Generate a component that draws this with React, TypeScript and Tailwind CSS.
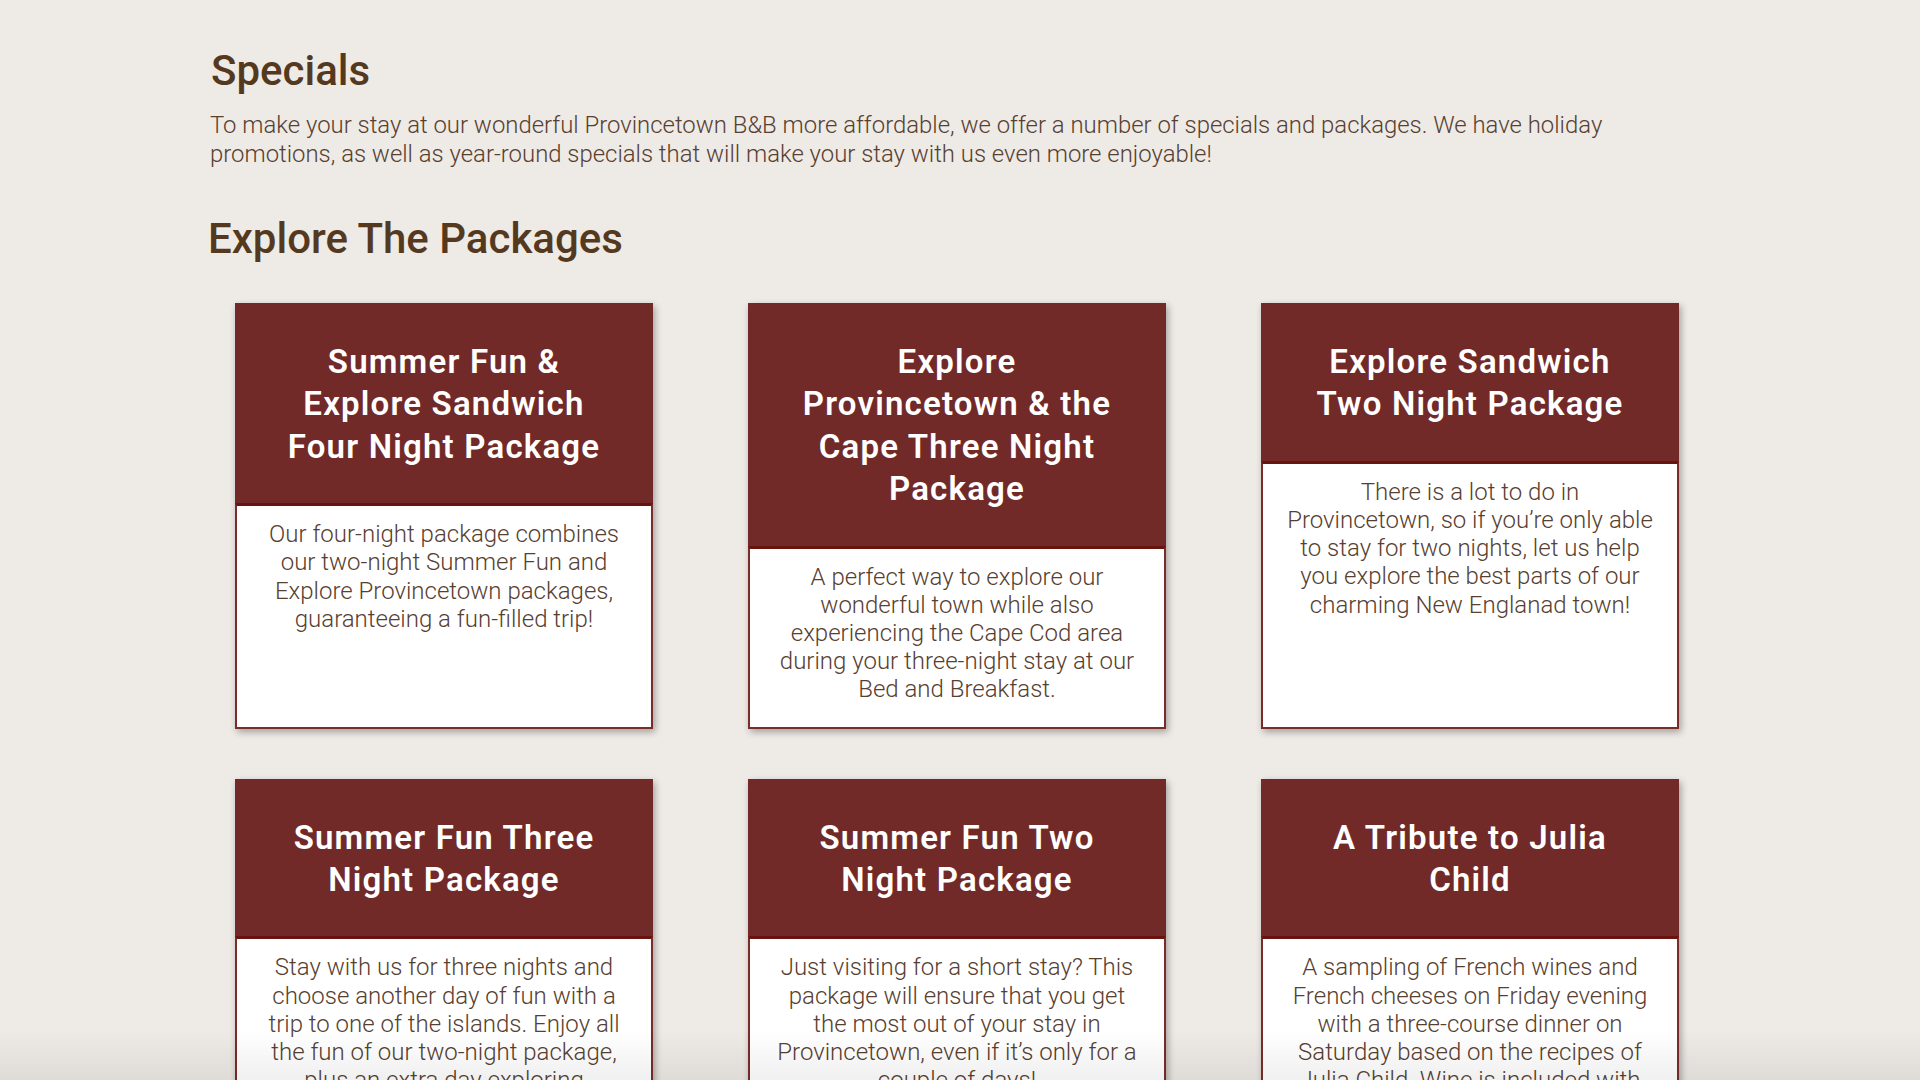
import React from "react";

type Pkg = { title: string[]; body: string[] };

const packages: Pkg[] = [
  {
    title: ["Summer Fun &", "Explore Sandwich", "Four Night Package"],
    body: [
      "Our four-night package combines",
      "our two-night Summer Fun and",
      "Explore Provincetown packages,",
      "guaranteeing a fun-filled trip!",
    ],
  },
  {
    title: ["Explore", "Provincetown & the", "Cape Three Night", "Package"],
    body: [
      "A perfect way to explore our",
      "wonderful town while also",
      "experiencing the Cape Cod area",
      "during your three-night stay at our",
      "Bed and Breakfast.",
    ],
  },
  {
    title: ["Explore Sandwich", "Two Night Package"],
    body: [
      "There is a lot to do in",
      "Provincetown, so if you\u2019re only able",
      "to stay for two nights, let us help",
      "you explore the best parts of our",
      "charming New Englanad town!",
    ],
  },
  {
    title: ["Summer Fun Three", "Night Package"],
    body: [
      "Stay with us for three nights and",
      "choose another day of fun with a",
      "trip to one of the islands. Enjoy all",
      "the fun of our two-night package,",
      "plus an extra day exploring",
      "Martha\u2019s Vineyard or Nantucket.",
    ],
  },
  {
    title: ["Summer Fun Two", "Night Package"],
    body: [
      "Just visiting for a short stay? This",
      "package will ensure that you get",
      "the most out of your stay in",
      "Provincetown, even if it\u2019s only for a",
      "couple of days!",
    ],
  },
  {
    title: ["A Tribute to Julia", "Child"],
    body: [
      "A sampling of French wines and",
      "French cheeses on Friday evening",
      "with a three-course dinner on",
      "Saturday based on the recipes of",
      "Julia Child. Wine is included with",
      "dinner.",
    ],
  },
];

function Card({ p }: { p: Pkg }) {
  return (
    <div className="flex flex-col shadow-[2px_3px_7px_rgba(0,0,0,0.32)]">
      <div className="bg-[#722a28] px-[10px] pt-[38px] pb-[35px] text-center">
        <h3 className="text-[33px] leading-[42.4px] font-semibold tracking-[1.2px] text-white whitespace-nowrap">
          {p.title.map((t, i) => (
            <React.Fragment key={i}>
              {t}
              {i < p.title.length - 1 && <br />}
            </React.Fragment>
          ))}
        </h3>
      </div>
      <div className="flex-1 bg-white border-2 border-[#7a2c29] border-t-[3px] border-t-[#6a1410] px-[16px] pt-[14px] pb-[23px] text-center">
        <p className="text-[24px] leading-[28.2px] font-light text-[#574030] whitespace-nowrap">
          {p.body.map((t, i) => (
            <React.Fragment key={i}>
              {t}
              {i < p.body.length - 1 && <br />}
            </React.Fragment>
          ))}
        </p>
      </div>
    </div>
  );
}

export default function App() {
  return (
    <div className="min-h-screen bg-[#eeeae6] font-['Roboto',sans-serif] antialiased">
      <div className="w-[1500px] mx-auto pt-[46px] pb-[80px]">
        <h1 className="ml-[1px] text-[42px] leading-[50px] font-medium text-[#55391f]">
          Specials
        </h1>
        <p className="mt-[15px] text-[23.9px] leading-[28.5px] font-light text-[#574030] whitespace-nowrap">
          To make your stay at our wonderful Provincetown B&amp;B more affordable, we offer a number of specials and packages. We have holiday
          <br />
          promotions, as well as year-round specials that will make your stay with us even more enjoyable!
        </p>
        <h2 className="-ml-[2px] mt-[46px] text-[42px] leading-[50px] font-medium text-[#55391f]">
          Explore The Packages
        </h2>
        <div className="mt-[39px] ml-[25px] w-[1444px] grid grid-cols-[418px_418px_418px] gap-x-[95px] gap-y-[50px]">
          {packages.map((p, i) => (
            <Card key={i} p={p} />
          ))}
        </div>
      </div>
      <div className="fixed bottom-0 inset-x-0 h-[50px] pointer-events-none bg-linear-to-b from-transparent to-black/[0.06]" />
    </div>
  );
}
